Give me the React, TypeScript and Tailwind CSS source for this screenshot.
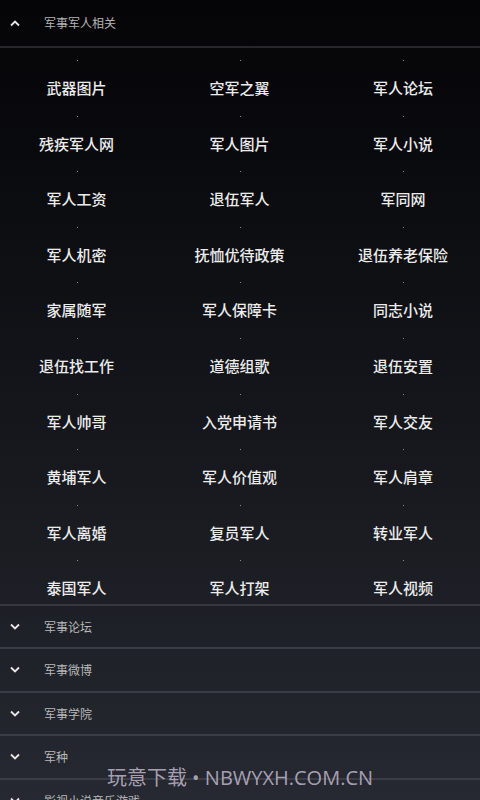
import React from "react";

const items = [
  "武器图片", "空军之翼", "军人论坛",
  "残疾军人网", "军人图片", "军人小说",
  "军人工资", "退伍军人", "军同网",
  "军人机密", "抚恤优待政策", "退伍养老保险",
  "家属随军", "军人保障卡", "同志小说",
  "退伍找工作", "道德组歌", "退伍安置",
  "军人帅哥", "入党申请书", "军人交友",
  "黄埔军人", "军人价值观", "军人肩章",
  "军人离婚", "复员军人", "转业军人",
  "泰国军人", "军人打架", "军人视频",
];

const sections = ["军事论坛", "军事微博", "军事学院", "军种", "影视小说音乐游戏"];

function Chevron({ up }: { up?: boolean }) {
  return (
    <svg width="12" height="8" viewBox="0 0 12 8" className="shrink-0">
      <path
        d={up ? "M2 6.5 L6 2.5 L10 6.5" : "M2 1.5 L6 5.5 L10 1.5"}
        fill="none"
        stroke="#e8e8e8"
        strokeWidth="1.8"
      />
    </svg>
  );
}

export default function App() {
  return (
    <div
      className="relative w-[480px] h-[800px] overflow-hidden bg-gradient-to-b from-[#050507] to-[#262931]"
      style={{ fontFamily: '"Noto Sans CJK SC", "Noto Sans", sans-serif' }}
    >
      <div className="flex items-center h-[48px] pl-[9px] border-b-2 border-[#26272b]">
        <Chevron up />
        <span className="ml-[23px] text-[12px] text-[#b4b4b4]">军事军人相关</span>
      </div>

      <div className="grid grid-cols-[153px_173px_154px] border-b-2 border-[#353841]">
        {items.map((t, i) => (
          <div key={i} className="relative h-[55.6px] flex justify-center">
            <div className="absolute top-[12px] left-1/2 w-px h-px bg-[#8a8a8a]" />
            <span className="mt-[29px] text-[15px] leading-[22px] font-medium text-[#ececec]">{t}</span>
          </div>
        ))}
      </div>

      {sections.map((s) => (
        <div key={s} className="flex items-center h-[43.5px] pl-[9px] border-b-2 border-[#3a3d46]">
          <Chevron />
          <span className="ml-[23px] text-[12px] text-[#b8b8b8]">{s}</span>
        </div>
      ))}

      <div
        className="absolute left-0 right-0 top-[764px] text-center text-[20px] leading-[28px] text-[#b9b0c2]/90"
        style={{ fontFamily: '"Open Sans", "Noto Sans CJK SC", sans-serif' }}
      >
        玩意下载 • NBWYXH.COM.CN
      </div>
    </div>
  );
}
